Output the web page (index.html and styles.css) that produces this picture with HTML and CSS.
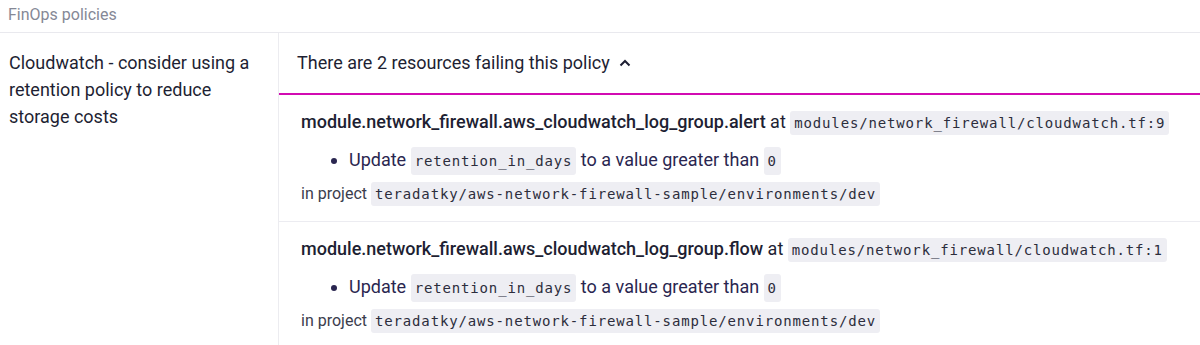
FILE: index.html
```html
<!DOCTYPE html>
<html lang="en">
<head>
  <meta charset="UTF-8">
  <meta name="viewport" content="width=device-width, initial-scale=1.0">
  <title>FinOps policies</title>
  <link rel="stylesheet" href="styles.css">
</head>
<body>
  <div class="policies">
    <div class="policies-title">FinOps policies</div>

    <div class="policy">
      <div class="policy-name">Cloudwatch - consider using a retention policy to reduce storage costs</div>

      <div class="policy-detail">
        <div class="policy-toggle">
          There are 2 resources failing this policy
          <svg class="chevron" width="14" height="14" viewBox="0 0 14 14"><path d="M2.5 9.5 L7 5 L11.5 9.5" fill="none" stroke="#1e1f33" stroke-width="2"/></svg>
        </div>

        <div class="resource">
          <div class="resource-title"><b>module.network_firewall.aws_cloudwatch_log_group.alert</b> at <code>modules/network_firewall/cloudwatch.tf:9</code></div>
          <ul class="resource-issues">
            <li>Update <code>retention_in_days</code> to a value greater than <code>0</code></li>
          </ul>
          <div class="resource-project">in project <code>teradatky/aws-network-firewall-sample/environments/dev</code></div>
        </div>

        <div class="resource">
          <div class="resource-title"><b>module.network_firewall.aws_cloudwatch_log_group.flow</b> at <code>modules/network_firewall/cloudwatch.tf:1</code></div>
          <ul class="resource-issues">
            <li>Update <code>retention_in_days</code> to a value greater than <code>0</code></li>
          </ul>
          <div class="resource-project">in project <code>teradatky/aws-network-firewall-sample/environments/dev</code></div>
        </div>
      </div>
    </div>
  </div>
</body>
</html>
```

FILE: styles.css
```css
html, body {
  margin: 0;
  padding: 0;
  box-sizing: border-box;
  background-color: #fff;
  color: #1e1f33;
  font-family: Roboto, "Liberation Sans", sans-serif;
  font-size: 18px;
}
*, *:before, *:after { box-sizing: inherit; }

.policies-title {
  height: 33px;
  line-height: 30px;
  padding: 0 8px;
  font-size: 16px;
  color: #858896;
  border-bottom: 1px solid #e9e9ee;
}

.policy { display: flex; }
.policy .policy-name {
  width: 279px;
  flex-shrink: 0;
  padding: 16px 20px 0 9px;
  line-height: 27px;
  border-right: 1px solid #ececf0;
}
.policy .policy-detail { flex: 1; }

.policy-toggle {
  height: 62px;
  display: flex;
  align-items: center;
  gap: 8px;
  padding: 0 18px 2px;
  border-bottom: 2px solid #d20bb2;
}
.policy-toggle .chevron { margin-top: 1px; }

.resource {
  padding: 16px 22px 16px;
  border-bottom: 1px solid #ececf1;
}
.resource:last-child { border-bottom: none; }

.resource-title {
  font-size: 18px;
  line-height: 22px;
}
.resource-title b { font-weight: 500; }

.resource-issues {
  margin: 14px 0 0;
  padding-left: 48px;
  line-height: 26px;
  font-size: 18px;
  color: #2a2650;
}

.resource-project {
  margin-top: 10px;
  font-size: 16px;
  line-height: 22px;
  color: #3b3d4d;
}

code {
  font-family: "DejaVu Sans Mono", "Liberation Mono", monospace;
  font-size: 14px;
  line-height: 1;
  letter-spacing: 0.85px;
  background-color: #eeeef3;
  border-radius: 3px;
  padding: 4px 4px;
  color: #2c2d3c;
}
.resource-issues code { padding: 6px 4px; }
```
